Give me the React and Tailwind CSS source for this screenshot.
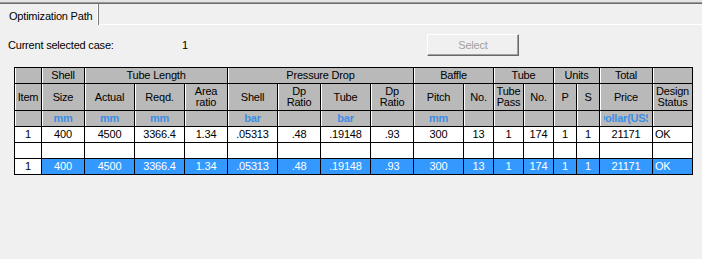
import React from 'react';

const head1 = [
  { t: '', c: '' },
  { t: 'Shell', c: '' },
  { t: 'Tube Length', c: 'col-span-3' },
  { t: 'Pressure Drop', c: 'col-span-4' },
  { t: 'Baffle', c: 'col-span-2' },
  { t: 'Tube', c: 'col-span-2' },
  { t: 'Units', c: 'col-span-2' },
  { t: 'Total', c: '' },
  { t: '', c: '' },
];

const head2 = [
  ['Item'], ['Size'], ['Actual'], ['Reqd.'], ['Area', 'ratio'], ['Shell'], ['Dp', 'Ratio'],
  ['Tube'], ['Dp', 'Ratio'], ['Pitch'], ['No.'], ['Tube', 'Pass'], ['No.'], ['P'], ['S'],
  ['Price'], ['Design', 'Status'],
];

const units = ['', 'mm', 'mm', 'mm', '', 'bar', '', 'bar', '', 'mm', '', '', '', '', '', 'Dollar(US$)', ''];

const row = ['400', '4500', '3366.4', '1.34', '.05313', '.48', '.19148', '.93', '300', '13', '1', '174', '1', '1', '21171'];

const headCell = 'bg-[#b9b9b9] border-r border-b border-black shadow-[inset_1px_0_0_#ffffff] flex items-center justify-center overflow-hidden whitespace-nowrap';
const dataCell = 'border-r border-b border-black flex items-center justify-center overflow-hidden whitespace-nowrap';

const ResultRow = ({ selected }) => (
  <>
    <div className={`${dataCell} bg-white text-black`}>1</div>
    {row.map((v, i) => (
      <div key={i} className={`${dataCell} ${selected ? 'bg-[#3399ff] text-white' : 'bg-white text-black'}`}>
        {v}
      </div>
    ))}
    <div className={`${dataCell} !justify-start pl-[2px] ${selected ? 'bg-[#3399ff] text-white' : 'bg-white text-black'}`}>
      OK
    </div>
  </>
);

export default function App() {
  return (
    <div className="w-[702px] h-[259px] overflow-hidden bg-[#f0f0f0] text-[11px] tracking-[-0.2px] text-black font-['Liberation_Sans',Arial,sans-serif]">
      {/* frame edge above the tabs */}
      <div className="h-[2px] bg-[#e4e4e4]" />
      <div className="h-[1px] bg-[#9a9a9a]" />
      <div className="h-[1px] bg-[#6d6d6d]" />

      {/* Tab strip */}
      <div className="flex h-[21px]">
        <div className="w-[99px] flex items-center pl-[9px] pt-[3px] border-r border-[#7a7a7a] shadow-[inset_-1px_0_0_#ffffff]">
          Optimization Path
        </div>
        <div className="flex-1 border-b border-white" />
      </div>

      {/* Case selection */}
      <div className="flex items-center h-[22px] mt-[9px] pl-[8px]">
        <span className="w-[174px]">Current selected case:</span>
        <span className="w-[245px]">1</span>
        <button className="w-[92px] h-[22px] bg-[#f0f0f0] text-[#a0a0a0] border-t border-l border-white border-r border-b border-r-[#696969] border-b-[#696969] shadow-[inset_-1px_-1px_0_#a0a0a0]">
          Select
        </button>
      </div>

      {/* Optimization grid */}
      <div className="ml-[14px] mt-[11px] w-max border-l border-t border-black grid grid-cols-[27px_43px_50px_50px_43px_50px_43px_50px_43px_50px_30px_30px_30px_23px_23px_53px_40px] grid-rows-[16px_27px_16px_16px_16px_16px]">
        {head1.map((h, i) => (
          <div key={'a' + i} className={`${headCell} ${h.c}`}>{h.t}</div>
        ))}
        {head2.map((h, i) => (
          <div key={'b' + i} className={`${headCell} flex-col leading-[11px]`}>
            {h.map((l) => (
              <span key={l}>{l}</span>
            ))}
          </div>
        ))}
        {units.map((u, i) => (
          <div key={'c' + i} className={`${headCell} font-bold text-[#3d8ee6]`}>
            <span className="w-[44px] flex justify-center overflow-hidden">{u}</span>
          </div>
        ))}
        <ResultRow />
        {Array.from({ length: 17 }).map((_, i) => (
          <div key={'e' + i} className={`${dataCell} bg-white`} />
        ))}
        <ResultRow selected />
      </div>
    </div>
  );
}
